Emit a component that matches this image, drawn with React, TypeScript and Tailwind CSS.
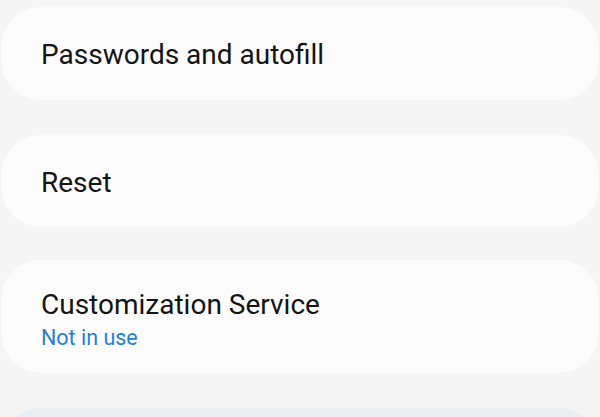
import React from 'react';

interface RowProps {
  title: string;
  subtitle?: string;
  className?: string;
}

const Row: React.FC<RowProps> = ({ title, subtitle, className = '' }) => {
  return (
    <div className={`mx-px rounded-[40px] bg-[#fcfcfc] flex flex-col justify-center pl-[40px] ${className}`}>
      <span className="text-[28px] leading-[34px] text-[#141414]">{title}</span>
      {subtitle && (
        <span className="text-[21.5px] leading-[28px] mt-[2px] text-[#2580d2]">{subtitle}</span>
      )}
    </div>
  );
};

const App: React.FC = () => {
  return (
    <div
      className="w-[600px] h-[417px] overflow-hidden bg-[#f5f5f5] pt-[7px] flex flex-col"
      style={{ fontFamily: 'Roboto, "Noto Sans", sans-serif' }}
    >
      <Row title="Passwords and autofill" className="h-[93px] pt-[3px] shrink-0" />
      <Row title="Reset" className="h-[92px] mt-[35px] pt-[3px] shrink-0" />
      <Row title="Customization Service" subtitle="Not in use" className="h-[113px] mt-[33px] pt-[6px] shrink-0" />
      <div className="mx-px mt-[35px] h-[80px] shrink-0 rounded-[40px] bg-[#e9eef3]" />
    </div>
  );
};

export default App;
